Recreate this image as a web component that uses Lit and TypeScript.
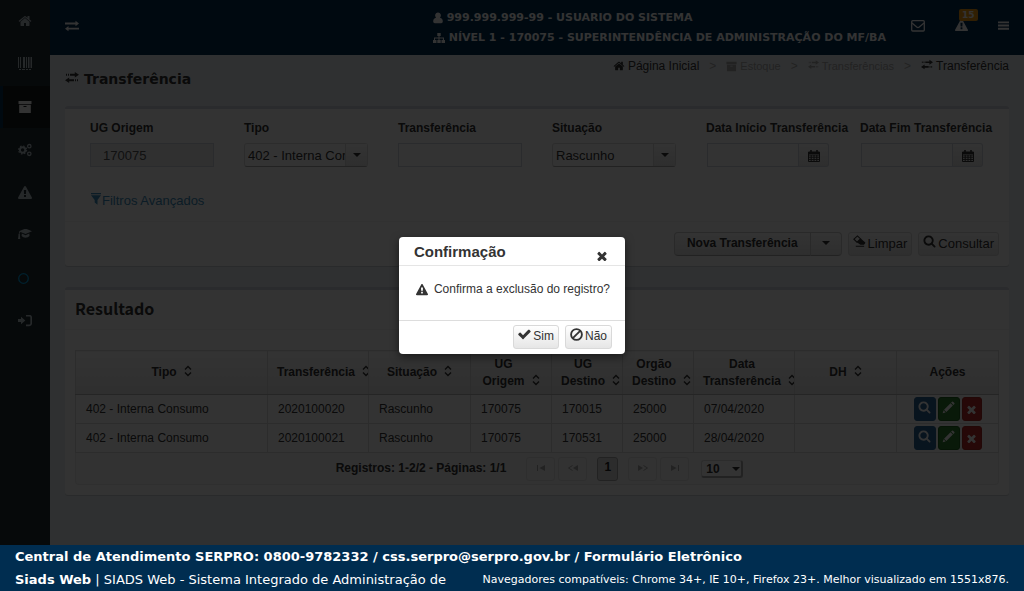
import { LitElement, html, css, svg, nothing } from "lit";
import { customElement, property } from "lit/decorators.js";

const SHAPES: Record<string, { box: string; body: unknown }> = {
  home: {
    box: "0 0 1792 1792",
    body: svg`<path d="M1472 992v480q0 26-19 45t-45 19h-384v-384h-256v384h-384q-26 0-45-19t-19-45v-480q0-1 .5-3t.5-3l575-474 575 474q1 2 1 6zm223-69l-62 74q-8 9-21 11h-3q-13 0-21-7l-692-577-692 577q-12 8-24 7-13-2-21-11l-62-74q-8-10-7-23.5t11-21.5l719-599q32-26 76-26t76 26l244 204v-195q0-14 9-23t23-9h192q14 0 23 9t9 23v408l219 182q10 8 11 21.5t-7 23.5z"/>`,
  },
  warning: {
    box: "0 0 1792 1792",
    body: svg`<path d="M1024 1375v-190q0-14-9.5-23.5t-22.5-9.5h-192q-13 0-22.5 9.5t-9.5 23.5v190q0 14 9.5 23.5t22.5 9.5h192q13 0 22.5-9.5t9.5-23.5zm-2-374l18-459q0-12-10-19-13-11-24-11h-220q-11 0-24 11-10 7-10 21l17 457q0 10 10 16.5t24 6.5h185q14 0 23.5-6.5t10.5-16.5zm-14-934l768 1408q35 63-2 126-17 29-46.5 46t-63.5 17h-1536q-34 0-63.5-17t-46.5-46q-37-63-2-126l768-1408q17-31 47-49t65-18 65 18 47 49z"/>`,
  },
  times: {
    box: "256 256 1280 1280",
    body: svg`<path d="M1490 1322q0 40-28 68l-136 136q-28 28-68 28t-68-28l-294-294-294 294q-28 28-68 28t-68-28l-136-136q-28-28-28-68t28-68l294-294-294-294q-28-28-28-68t28-68l136-136q28-28 68-28t68 28l294 294 294-294q28-28 68-28t68 28l136 136q28 28 28 68t-28 68l-294 294 294 294q28 28 28 68z"/>`,
  },
  check: {
    box: "90 130 1620 1620",
    body: svg`<path d="M1671 566q0 40-28 68l-724 724-136 136q-28 28-68 28t-68-28l-136-136-362-362q-28-28-28-68t28-68l136-136q28-28 68-28t68 28l294 295 656-657q28-28 68-28t68 28l136 136q28 28 28 68z"/>`,
  },
  search: {
    box: "0 64 1792 1792",
    body: svg`<path d="M1216 832q0-185-131.5-316.5t-316.5-131.5-316.5 131.5-131.5 316.5 131.5 316.5 316.5 131.5 316.5-131.5 131.5-316.5zm512 832q0 52-38 90t-90 38q-54 0-90-38l-343-342q-179 124-399 124-143 0-273.5-55.5t-225-150-150-225-55.5-273.5 55.5-273.5 150-225 225-150 273.5-55.5 273.5 55.5 225 150 150 225 55.5 273.5q0 220-124 399l343 343q37 37 37 90z"/>`,
  },
  ban: {
    box: "0 0 12 12",
    body: svg`<circle cx="6" cy="6" r="5" fill="none" stroke="currentColor" stroke-width="1.7"/><path d="M2.6 9.4L9.4 2.6" stroke="currentColor" stroke-width="1.7"/>`,
  },
  barcode: {
    box: "0 0 14 14",
    body: svg`<path d="M0 0h1v11H0zM2 0h1v11H2zM5 0h2v11H5zM8 0h1v11H8zM10 0h1.500v11H10zM12.500 0H14v11h-1.500zM1 12h2v1H1zM4 12h3v1H4zM8 12h2v1H8zM11 12h2v1h-2z"/>`,
  },
  archive: {
    box: "0 0 14 14",
    body: svg`<path fill-rule="evenodd" d="M.5 1h13v3H.5zM1.200 4.800h11.600V13H1.200zM5.500 6h3v1h-3z"/>`,
  },
  cogs: {
    box: "0 0 14 14",
    body: svg`<g fill="none" stroke="currentColor"><circle cx="4.600" cy="7" r="2.700" stroke-width="1.900"/><circle cx="4.600" cy="7" r="4" stroke-width="1.200" stroke-dasharray="1.600 1.540"/><circle cx="11.300" cy="3.200" r="1.700" stroke-width="1.300"/><circle cx="11.300" cy="10.800" r="1.700" stroke-width="1.300"/></g>`,
  },
  graduation: {
    box: "0 2 14 14",
    body: svg`<path d="M7.500 1.500L14 4.200 7.500 7 2.500 4.900q-.9.600-1 2.200.8.500.4 1.300L2.300 12H0l.5-3.600q-.3-.8.3-1.300.1-1.700.8-2.600L1 4.200zM3.800 6.600l3.700 1.600 3.800-1.600.2 2.400q-1.500 1.800-4 1.800T3.600 9z"/>`,
  },
  circle: {
    box: "0 0 14 14",
    body: svg`<circle cx="5.500" cy="6.500" r="4.800" fill="none" stroke="currentColor" stroke-width="1.300"/>`,
  },
  signin: {
    box: "0 0 14 14",
    body: svg`<path d="M0 4h3V1.800L7.300 5.500 3 9.200V7H0z"/><path d="M8 .6h3.200a2 2 0 0 1 2 2v5.800a2 2 0 0 1-2 2H8" fill="none" stroke="currentColor" stroke-width="1.700"/>`,
  },
  exchange: {
    box: "0 0 14 12",
    body: svg`<path d="M0 2.500h10.500V.8L14 3.500l-3.500 2.700V4.400H0zM14 7.700H3.500V6L0 8.700l3.500 2.600V9.600H14z"/>`,
  },
  transfer: {
    box: "0 0 14 12",
    body: svg`<path d="M1 1.800h1v2H1zM3 1.800h1v2H3zM5 1.800h4.800V0L14 2.800 9.800 5.600V3.800H5zM13 7.200h-1v2h1zM11 7.200h-1v2h1zM9 7.200H4.200V5.400L0 8.200 4.200 11V9.200H9z"/>`,
  },
  user: {
    box: "1 0 10 12",
    body: svg`<path d="M6 .5a2.800 3 0 0 1 2 5.200q2.800.6 2.800 3.800 0 1.700-1.600 1.700H2.800q-1.600 0-1.600-1.700Q1.200 6.300 4 5.700A2.800 3 0 0 1 6 .5z"/>`,
  },
  sitemap: {
    box: "0 0 12 12",
    body: svg`<path d="M4.300 1h3.400v3H6.500v1.500H11V8h1v3H8.500V8h1.400V6.500H6.500V8h1.200v3H4.300V8h1.200V6.500H2V8h1.500v3H0V8h1V5.500h4.500V4H4.300z"/>`,
  },
  envelope: {
    box: "0 0 14 14",
    body: svg`<rect x=".7" y="1.700" width="12.600" height="10.300" rx="1" fill="none" stroke="currentColor" stroke-width="1.300"/><path d="M1 4l4.700 4q1.300 1 2.600 0L13 4" fill="none" stroke="currentColor" stroke-width="1.300"/>`,
  },
  bars: { box: "0 0 12 12", body: svg`<path d="M0 1.500h12v2H0zM0 5h12v2H0zM0 8.500h12v2H0z"/>` },
  calendar: {
    box: "0 0 12 12",
    body: svg`<path d="M3 0v3M9 0v3" stroke="currentColor" stroke-width="1.600"/><path d="M.5 2h11v9.500H.5zM.5 5h11M3.200 5v6.500M6 5v6.500M8.800 5v6.500M.5 7.200h11M.5 9.400h11" fill="none" stroke="currentColor"/><path d="M.5 2h11v2H.5z"/>`,
  },
  filter: { box: "0 0 12 14", body: svg`<path d="M1 0h10v1.200H1zM1 2.200h10L7.500 7v4.800L4.700 9.500V7z"/>` },
  eraser: {
    box: "0 0 14 14",
    body: svg`<path d="M1 4.500L4.800 1l3.400 3.200-3.900 3.600z" fill="none" stroke="currentColor" stroke-width="1.200"/><path d="M8.300 3.900l4.700 4q.6.600 0 1.200L11.800 10.500H8L4.200 7.800zM3 11.500h9v1.200H3z"/>`,
  },
  pencil: {
    box: "0 0 14 14",
    body: svg`<path d="M10.800.7q.5-.5 1 0l1.500 1.500q.5.500 0 1l-1 1-2.500-2.500zM9.200 2.300l2.500 2.500-7 7-2.500-2.500zM1.700 10l2.300 2.300L.7 13.300z"/>`,
  },
  caret: { box: "0 0 8 4", body: svg`<path d="M0 0h8L4 4z"/>` },
  sort: {
    box: "0 0 8 12",
    body: svg`<path d="M1 4.500l3-3 3 3M1 7.500l3 3 3-3" fill="none" stroke="currentColor" stroke-width="1.400"/>`,
  },
  first: { box: "0 0 12 8", body: svg`<path d="M2 1h1v6H2zM10 1v6L4.500 4z"/>` },
  prev: { box: "0 0 12 8", body: svg`<path d="M11 1v6L6 4z"/><path d="M5.500 1.500L1.500 4l4 2.500" fill="none" stroke="currentColor"/>` },
  next: { box: "0 0 12 8", body: svg`<path d="M1 1v6l5-3z"/><path d="M6.500 1.500l4 2.500-4 2.500" fill="none" stroke="currentColor"/>` },
  last: { box: "0 0 12 8", body: svg`<path d="M9 1h1v6H9zM2 1v6l5.500-3z"/>` },
};

const icon = (name: string, w = 14, h = w) =>
  svg`<svg class="icon" viewBox=${SHAPES[name].box} width=${w} height=${h} fill="currentColor" aria-hidden="true">${SHAPES[name].body}</svg>`;

const base = css`
  * { box-sizing: border-box; }
  .icon { display: block; flex: none; }
  button, input, select { font: inherit; color: inherit; margin: 0; }
  a { color: inherit; text-decoration: none; }
  .btn {
    display: inline-flex;
    align-items: center;
    justify-content: center;
    gap: 2px;
    height: 24px;
    padding: 0 4px 2px;
    border: 1px solid #d9d9d9;
    border-radius: 3px;
    background: linear-gradient(#fff, #e6e6e6);
    color: #333;
    white-space: nowrap;
  }
  .lift .icon { margin-bottom: 3px; }
`;

@customElement("side-menu")
class SideMenu extends LitElement {
  static styles = [
    base,
    css`
      :host { display: block; width: 50px; flex: none; background: #222d32; color: #b8c7ce; }
      nav { display: flex; flex-direction: column; gap: 1px; }
      a { display: flex; align-items: center; height: 42px; padding-left: 15px; border-left: 3px solid transparent; }
      .active { background: #14191c; border-left-color: #002d50; color: #fff; }
      .accent { color: #00a0e0; }
    `,
  ];
  items = [
    ["home", "Página Inicial"],
    ["barcode", "Catálogo"],
    ["archive", "Estoque"],
    ["cogs", "Configurações"],
    ["warning", "Avisos"],
    ["graduation", "Treinamento"],
    ["circle", "Ajuda"],
    ["signin", "Entrar"],
  ];
  render() {
    return html`<nav>
      ${this.items.map(
        ([name, label]) =>
          html`<a href="#" aria-label=${label} class=${name === "archive" ? "active" : name === "circle" ? "accent" : ""}>${icon(name, 14)}</a>`
      )}
    </nav>`;
  }
}

@customElement("top-bar")
class TopBar extends LitElement {
  static styles = [
    base,
    css`
      :host { display: block; background: #002d50; color: #fff; }
      header { display: flex; align-items: center; height: 55px; padding: 0 15px; }
      button { display: flex; position: relative; padding: 0 0 4px; border: 0; background: none; }
      .who {
        margin-left: auto;
        font: bold 11px/20px "DejaVu Sans", sans-serif;
        white-space: nowrap;
      }
      .who p { display: flex; align-items: center; gap: 4px; margin: 0; }
      .tools { display: flex; align-items: center; gap: 30px; margin-left: 25px; }
      .badge {
        position: absolute;
        left: 4px;
        top: -10px;
        padding: 0 3px;
        border-radius: 2px;
        background: #f39c12;
        font: bold 9px/12px "DejaVu Sans", sans-serif;
      }
    `,
  ];
  render() {
    return html`<header>
      <button aria-label="Alternar menu">${icon("exchange", 14, 12)}</button>
      <div class="who">
        <p>${icon("user", 10, 12)} 999.999.999-99 - USUARIO DO SISTEMA</p>
        <p>${icon("sitemap", 12)} NÍVEL 1 - 170075 - SUPERINTENDÊNCIA DE ADMINISTRAÇÃO DO MF/BA</p>
      </div>
      <div class="tools">
        <button aria-label="Mensagens">${icon("envelope", 14)}</button>
        <button aria-label="Alertas">${icon("warning", 13)}<span class="badge">15</span></button>
        <button aria-label="Menu">${icon("bars", 11)}</button>
      </div>
    </header>`;
  }
}

@customElement("filter-panel")
class FilterPanel extends LitElement {
  static styles = [
    base,
    css`
      :host {
        display: block;
        border-top: 3px solid #d2d6de;
        border-radius: 3px;
        background: #fff;
        box-shadow: 0 1px 1px rgba(0, 0, 0, 0.15);
        font-size: 13px;
      }
      .fields { display: grid; grid-template-columns: repeat(6, minmax(0, 1fr)); padding: 9px 10px 0; }
      .field { padding: 0 15px; }
      label { display: block; margin-bottom: 5px; font-size: 12px; font-weight: bold; line-height: 20px; white-space: nowrap; }
      input { display: block; width: 100%; min-width: 0; height: 24px; padding: 0 12px; border: 1px solid #d2d6de; background: #fff; border-radius: 0; }
      input:disabled { background: #eee; color: #555; }
      .combo { position: relative; }
      select {
        display: block;
        appearance: none;
        width: 100%;
        height: 24px;
        padding: 0 22px 0 3px;
        border: 1px solid #ddd;
        border-bottom-color: #aaa;
        border-radius: 3px;
        background: #fff;
      }
      .arrow {
        position: absolute;
        top: 1px;
        right: 1px;
        bottom: 1px;
        width: 22px;
        display: grid;
        place-items: center;
        border-left: 1px solid #ddd;
        background: linear-gradient(#fff, #e6e6e6);
        pointer-events: none;
      }
      .date { display: flex; margin: 1px 1px 0; }
      .date .btn { width: 30px; flex: none; padding: 2px 0 0; border-color: #d2d6de; border-left: 0; border-radius: 0 3px 3px 0; }
      .more { display: inline-flex; align-items: center; gap: 0; margin: 25px 0 11px 25px; line-height: 18px; color: #3c8dbc; }
      .actions { display: flex; justify-content: flex-end; gap: 6px; padding: 10px; border-top: 1px solid #f4f4f4; }
      .split { display: flex; }
      .split .btn { font-size: 12px; font-weight: bold; border-color: #ccc; border-bottom-color: #aaa; }
      .split .main { padding: 0 12px 2px; border-radius: 4px 0 0 4px; }
      .split .drop { width: 32px; margin-left: -1px; border-radius: 0 4px 4px 0; }
    `,
  ];
  text(id: string, label: string, value = "", disabled = false) {
    return html`<div class="field"><label for=${id}>${label}</label><input id=${id} .value=${value} ?disabled=${disabled} /></div>`;
  }
  combo(id: string, label: string, value: string) {
    return html`<div class="field">
      <label for=${id}>${label}</label>
      <div class="combo"><select id=${id}><option>${value}</option></select><span class="arrow">${icon("caret", 8, 4)}</span></div>
    </div>`;
  }
  date(id: string, label: string) {
    return html`<div class="field">
      <label for=${id}>${label}</label>
      <div class="date"><input id=${id} /><button class="btn" aria-label="Abrir calendário">${icon("calendar", 12)}</button></div>
    </div>`;
  }
  render() {
    return html`
      <div class="fields">
        ${this.text("origem", "UG Origem", "170075", true)} ${this.combo("tipo", "Tipo", "402 - Interna Consumo")}
        ${this.text("numero", "Transferência")} ${this.combo("situacao", "Situação", "Rascunho")}
        ${this.date("inicio", "Data Início Transferência")} ${this.date("fim", "Data Fim Transferência")}
      </div>
      <a class="more lift" href="#">${icon("filter", 12, 14)}Filtros Avançados</a>
      <div class="actions">
        <div class="split">
          <button class="btn main">Nova Transferência</button>
          <button class="btn drop" aria-label="Mais opções">${icon("caret", 8, 4)}</button>
        </div>
        <button class="btn lift">${icon("eraser", 13)}Limpar</button>
        <button class="btn lift">${icon("search", 13)}Consultar</button>
      </div>
    `;
  }
}

@customElement("result-panel")
class ResultPanel extends LitElement {
  static styles = [
    base,
    css`
      :host {
        display: block;
        border-top: 3px solid #d2d6de;
        border-radius: 3px;
        background: #fff;
        box-shadow: 0 1px 1px rgba(0, 0, 0, 0.15);
      }
      h2 {
        margin: 0;
        padding: 0 10px 2px;
        border-bottom: 1px solid #f4f4f4;
        font: bold 16px/37px "Noto Sans CJK SC", sans-serif;
      }
      .body { padding: 20px 10px 10px; }
      table { width: 100%; table-layout: fixed; border-collapse: collapse; }
      .w71 { width: 71px; }
      .w81 { width: 81px; }
      .w101 { width: 101px; }
      .w102 { width: 102px; }
      th, td { border: 1px solid #ddd; overflow: hidden; line-height: 17px; }
      th { height: 44px; padding: 4px 9px; background: linear-gradient(#fff, #e8e8e8); border-bottom-color: #bbb; }
      td { height: 29px; padding: 0 10px; white-space: nowrap; }
      .head { display: inline-flex; align-items: flex-end; gap: 7px; white-space: nowrap; }
      .head .icon { margin-bottom: 4px; }
      .two { white-space: pre-line; }
      .acts { display: flex; justify-content: center; gap: 2px; }
      .act { display: grid; place-items: center; width: 22px; height: 24px; padding: 0 0 3px; border: 1px solid; border-radius: 3px; color: #fff; }
      .view { background: #2a6496; border-color: #2a6496; }
      .edit { background: #2f7d2f; border-color: #1e641e; }
      .drop { width: 20px; padding: 0; background: #bd2c28; border-color: #ac2925; }
      .pager {
        display: flex;
        align-items: center;
        justify-content: center;
        gap: 3px;
        height: 32px;
        padding-left: 5px;
        border: 1px solid #e8e8e8;
        border-top: 0;
        border-radius: 0 0 4px 4px;
        background: #f7f7f7;
        font-weight: bold;
      }
      .count { margin-right: 17px; }
      .page { width: 29px; background: #f7f7f7; border-color: #e6e6e6; color: #aaa; }
      .current { width: 21px; margin: 0 7px; background: #ddd; border-color: #aaa; color: #222; }
      .size { position: relative; margin-left: 9px; }
      .size select { display: block; appearance: none; width: 42px; height: 18px; padding: 0 4px; border: 1px solid #ddd; border-right: 2px solid #aaa; border-bottom: 2px solid #aaa; border-radius: 3px; background: #fff; font-weight: bold; }
      .size .icon { position: absolute; right: 3px; top: 7px; pointer-events: none; }
    `,
  ];
  cols: [string, string, boolean][] = [
    ["Tipo", "", true],
    ["Transferência", "w101", true],
    ["Situação", "w102", true],
    ["UG\nOrigem", "w81", true],
    ["UG\nDestino", "w71", true],
    ["Orgão\nDestino", "w71", true],
    ["Data\nTransferência", "w101", true],
    ["DH", "w102", true],
    ["Ações", "w102", false],
  ];
  rows = [
    ["402 - Interna Consumo", "2020100020", "Rascunho", "170075", "170015", "25000", "07/04/2020", ""],
    ["402 - Interna Consumo", "2020100021", "Rascunho", "170075", "170531", "25000", "28/04/2020", ""],
  ];
  pageButton(name: string, label: string) {
    return html`<button class="btn page" disabled aria-label=${label}>${icon(name, 12, 8)}</button>`;
  }
  render() {
    return html`
      <h2>Resultado</h2>
      <div class="body">
        <table>
          <thead>
            <tr>
              ${this.cols.map(
                ([name, width, sortable]) =>
                  html`<th class=${width}><span class="head"><span class="two">${name}</span>${sortable ? icon("sort", 8, 12) : nothing}</span></th>`
              )}
            </tr>
          </thead>
          <tbody>
            ${this.rows.map(
              (row) => html`<tr>
                ${row.map((cell) => html`<td>${cell}</td>`)}
                <td>
                  <div class="acts">
                    <button class="act view" aria-label="Visualizar">${icon("search", 13)}</button>
                    <button class="act edit" aria-label="Editar">${icon("pencil", 13)}</button>
                    <button class="act drop" aria-label="Excluir">${icon("times", 9)}</button>
                  </div>
                </td>
              </tr>`
            )}
          </tbody>
        </table>
        <div class="pager">
          <span class="count">Registros: 1-2/2 - Páginas: 1/1</span>
          ${this.pageButton("first", "Primeira página")} ${this.pageButton("prev", "Página anterior")}
          <button class="btn current">1</button>
          ${this.pageButton("next", "Próxima página")} ${this.pageButton("last", "Última página")}
          <span class="size"><select aria-label="Registros por página"><option>10</option></select>${icon("caret", 8, 4)}</span>
        </div>
      </div>
    `;
  }
}

@customElement("confirm-dialog")
class ConfirmDialog extends LitElement {
  static styles = [
    base,
    css`
      :host {
        position: absolute;
        inset: 0;
        display: grid;
        place-items: center;
        background: rgba(0, 0, 0, 0.8);
        z-index: 1;
      }
      section { border-radius: 4px; background: #fff; box-shadow: 0 3px 9px rgba(0, 0, 0, 0.5); color: #333; }
      header { display: flex; justify-content: space-between; padding: 1px 18px 0 15px; border-bottom: 1px solid #e5e5e5; }
      h3 { margin: 0; font-size: 15px; line-height: 27px; }
      .close { display: flex; align-self: flex-end; margin-bottom: 4px; padding: 0; border: 0; background: none; }
      p { display: flex; align-items: center; gap: 6px; margin: 0; padding: 15px 15px 22px 17px; line-height: 17px; }
      footer { display: flex; justify-content: flex-end; gap: 6px; padding: 4px 13px 5px; border-top: 1px solid #ddd; }
    `,
  ];
  @property() heading = "";
  @property() message = "";
  render() {
    return html`<section role="dialog" aria-labelledby="heading">
      <header>
        <h3 id="heading">${this.heading}</h3>
        <button class="close" aria-label="Fechar">${icon("times", 10)}</button>
      </header>
      <p>${icon("warning", 12)}${this.message}</p>
      <footer>
        <button class="btn lift">${icon("check", 13)}Sim</button>
        <button class="btn lift">${icon("ban", 13)}Não</button>
      </footer>
    </section>`;
  }
}

@customElement("app-root")
class AppRoot extends LitElement {
  static styles = [
    base,
    css`
      :host {
        position: relative;
        display: flex;
        flex-direction: column;
        min-height: 100vh;
        background: #ecf0f5;
        color: #333;
        font: 12px/17px "Liberation Sans", Arial, sans-serif;
      }
      .shell { display: flex; flex: 1; }
      .page { flex: 1; min-width: 0; }
      .top { display: flex; justify-content: space-between; padding: 0 15px; height: 51px; }
      h1 { display: flex; align-items: center; gap: 5px; margin: 0; font: bold 14px/48px "DejaVu Sans", sans-serif; height: 48px; }
      ol { display: flex; gap: 10px; align-items: center; height: 22px; margin: 0; padding: 0; list-style: none; }
      li { display: flex; align-items: center; gap: 10px; }
      li + li::before { content: ">"; color: #aaa; }
      li a { display: flex; align-items: center; gap: 3px; }
      .off { color: #aaa; font-size: 11px; }
      .panels { display: flex; flex-direction: column; gap: 21px; padding: 0 15px 15px; }
      footer {
        position: relative;
        z-index: 2;
        padding: 0 15px;
        background: #002d50;
        color: #fff;
        font: 13px/23px "DejaVu Sans", sans-serif;
      }
      footer div { display: flex; justify-content: space-between; align-items: center; }
      footer p { margin: 0; white-space: nowrap; }
      .small { font-size: 11px; }
    `,
  ];
  render() {
    return html`
      <div class="shell">
        <side-menu></side-menu>
        <div class="page">
          <top-bar></top-bar>
          <div class="top">
            <h1 class="lift">${icon("transfer", 14, 12)}Transferência</h1>
            <ol>
              <li><a href="#">${icon("home", 12)}Página Inicial</a></li>
              <li><a class="off" href="#">${icon("archive", 11)}Estoque</a></li>
              <li><a class="off lift" href="#">${icon("transfer", 11, 10)}Transferências</a></li>
              <li><a class="lift" href="#">${icon("transfer", 12, 12)}Transferência</a></li>
            </ol>
          </div>
          <div class="panels">
            <filter-panel></filter-panel>
            <result-panel></result-panel>
          </div>
        </div>
      </div>
      <footer>
        <p><b>Central de Atendimento SERPRO: 0800-9782332 / <a href="#">css.serpro@serpro.gov.br</a> / <a href="#">Formulário Eletrônico</a></b></p>
        <div>
          <p><b>Siads Web</b> | SIADS Web - Sistema Integrado de Administração de</p>
          <p class="small">Navegadores compatíveis: Chrome 34+, IE 10+, Firefox 23+. Melhor visualizado em 1551x876.</p>
        </div>
      </footer>
      <confirm-dialog heading="Confirmação" message="Confirma a exclusão do registro?"></confirm-dialog>
    `;
  }
}
